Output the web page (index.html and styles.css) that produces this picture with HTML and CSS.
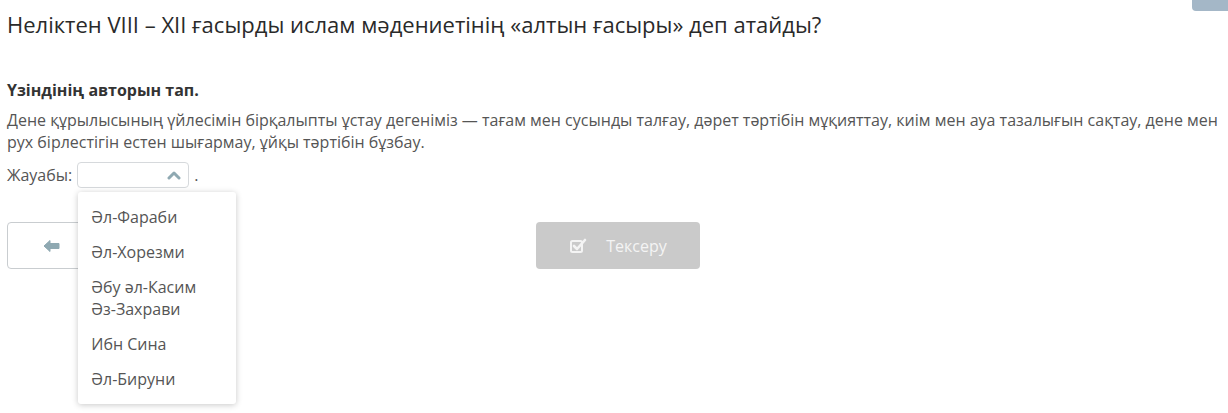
FILE: index.html
```html
<!DOCTYPE html>
<html lang="kk">
<head>
    <meta charset="UTF-8">
    <title>Тест</title>
    <link rel="stylesheet" href="styles.css">
</head>
<body>
    <div class="corner-tab"></div>
    <div class="quiz">
        <h1 class="question">Неліктен VIII – XII ғасырды ислам мәдениетінің «алтын ғасыры» деп атайды?</h1>

        <h2 class="task">Үзіндінің авторын тап.</h2>
        <p class="quote">Дене құрылысының үйлесімін бірқалыпты ұстау дегеніміз — тағам мен сусынды талғау, дәрет тәртібін мұқияттау, киім мен ауа тазалығын сақтау, дене мен рух бірлестігін естен шығармау, ұйқы тәртібін бұзбау.</p>

        <div class="answer">
            <span>Жауабы:</span>
            <div class="select">
                <svg class="chevron" width="14" height="10" viewBox="0 0 14 10">
                    <path d="M2 8 L7 3 L12 8" fill="none" stroke="#8fa9b2" stroke-width="3" stroke-linecap="round" stroke-linejoin="round"/>
                </svg>
                <ul class="options">
                    <li>Әл-Фараби</li>
                    <li>Әл-Хорезми</li>
                    <li>Әбу әл-Касим Әз-Захрави</li>
                    <li>Ибн Сина</li>
                    <li>Әл-Бируни</li>
                </ul>
            </div>
            <span>.</span>
        </div>

        <div class="nav">
            <button class="btn back">
                <svg width="18" height="14" viewBox="0 0 18 14">
                    <path d="M1 7 L7 1.5 L7 4.5 L16 4.5 L16 9.5 L7 9.5 L7 12.5 Z" fill="#8fa9b2" stroke="#8fa9b2" stroke-width="1" stroke-linejoin="round"/>
                </svg>
            </button>
            <button class="btn check">
                <svg width="17" height="15" viewBox="0 0 17 15">
                    <rect x="1" y="3" width="11" height="11" rx="1.5" fill="none" stroke="#f4f4f4" stroke-width="2"/>
                    <path d="M4 8 L7 11 L15 2" fill="none" stroke="#f4f4f4" stroke-width="2.6" stroke-linecap="round" stroke-linejoin="round"/>
                </svg>
                <span>Тексеру</span>
            </button>
            <div></div>
        </div>
    </div>
</body>
</html>
```

FILE: styles.css
```css
html, body {
    min-height: 100%;
}
body {
    margin: 0;
    padding: 0;
    min-height: 413px;
    font-family: 'Open Sans', 'Noto Sans', sans-serif;
    background: #fff;
    color: #555;
}
.corner-tab {
    position: absolute;
    top: 0;
    right: 0;
    width: 36px;
    height: 11px;
    background: #a4b7c7;
    border-bottom-left-radius: 4px;
}
.quiz {
    padding: 9px 7px 0 7px;
}
.question {
    margin: 0;
    font-size: 22px;
    font-weight: 400;
    line-height: 30px;
    color: #2a2a2a;
}
.task {
    margin: 40px 0 0;
    font-size: 16px;
    font-weight: 700;
    line-height: 22px;
    color: #333;
}
.quote {
    margin: 8px 0 0;
    font-size: 16px;
    line-height: 22px;
}
.answer {
    display: flex;
    align-items: center;
    gap: 5px;
    margin-top: 9px;
    font-size: 16px;
    line-height: 22px;
}
.select {
    position: relative;
    width: 110px;
    height: 24px;
    border: 1px solid #d6d9dc;
    border-radius: 4px;
    display: flex;
    align-items: center;
    justify-content: flex-end;
    z-index: 5;
}
.chevron {
    margin-right: 7px;
}
.options {
    position: absolute;
    top: 29px;
    left: 0;
    width: 158px;
    margin: 0;
    padding: 7px 0 8px;
    list-style: none;
    background: #fff;
    border-radius: 3px;
    box-shadow: 0 1px 6px rgba(0, 0, 0, 0.22);
}
.options li {
    padding: 6.5px 30px 6.5px 13px;
    line-height: 22px;
    color: #555;
}
.nav {
    display: grid;
    grid-template-columns: 1fr auto 1fr;
    align-items: center;
    margin-top: 34px;
    margin-right: -7px;
}
.btn {
    height: 47px;
    border-radius: 4px;
    font-family: inherit;
    font-size: 16px;
    display: flex;
    align-items: center;
    justify-content: center;
}
.back {
    width: 90px;
    background: #fff;
    border: 1px solid #c9cdd0;
    justify-self: start;
}
.check {
    width: 164px;
    background: #cacaca;
    border: none;
    color: #f4f4f4;
    gap: 19px;
    padding-right: 4px;
}
```
